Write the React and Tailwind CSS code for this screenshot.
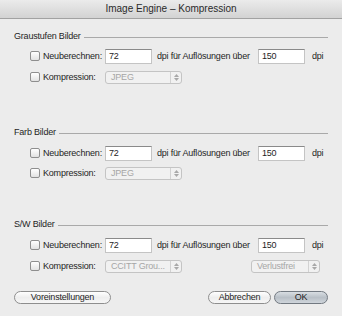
import React from 'react';

function Checkbox() {
  return (
    <span className="w-[10px] h-[10px] shrink-0 rounded-[2px] border border-[#8e8e8e] bg-gradient-to-b from-white to-[#e2e2e2]" />
  );
}

function TextInput({ value, className = '' }) {
  return (
    <div className={`h-[15px] shrink-0 bg-white border border-[#c4c4c4] border-t-[#8a8a8a] flex items-center pl-[3px] text-[#1e1e1e] ${className}`}>
      {value}
    </div>
  );
}

function Select({ value, className = '' }) {
  return (
    <div className={`h-[13px] shrink-0 flex items-center rounded-[3px] border border-[#c4c4c4] bg-[#f1f1f1] text-[#a6a6a6] ${className}`}>
      <span className="flex-1 pl-[5px] whitespace-nowrap overflow-hidden">{value}</span>
      <span className="w-[11px] h-full border-l border-[#d2d2d2] flex flex-col items-center justify-center gap-[1px]">
        <svg width="5" height="3" viewBox="0 0 5 3"><path d="M0 3 L2.5 0 L5 3 Z" fill="#a8a8a8" /></svg>
        <svg width="5" height="3" viewBox="0 0 5 3"><path d="M0 0 L2.5 3 L5 0 Z" fill="#a8a8a8" /></svg>
      </span>
    </div>
  );
}

function SectionHeader({ title, className = '' }) {
  return (
    <div className={`h-[12px] flex items-center px-[14px] ${className}`}>
      <div className="shrink-0 whitespace-nowrap text-[#1e1e1e]">{title}</div>
      <div className="grow ml-[3px] mt-[2px] border-t border-[#a9a9a9]" />
    </div>
  );
}

function ResampleRow({ className = '' }) {
  return (
    <div className={`h-[16px] flex items-center pl-[30px] whitespace-nowrap ${className}`}>
      <Checkbox />
      <span className="w-[65px] shrink-0 pl-[3px] text-[#1e1e1e]">Neuberechnen:</span>
      <TextInput value="72" className="w-[47px]" />
      <span className="w-[106px] shrink-0 pl-[5px] text-[#1e1e1e]">dpi für Auflösungen über</span>
      <TextInput value="150" className="w-[47px]" />
      <span className="pl-[7px] text-[#1e1e1e]">dpi</span>
    </div>
  );
}

function CompressionRow({ value, extra, className = '' }) {
  return (
    <div className={`h-[16px] flex items-center pl-[30px] whitespace-nowrap ${className}`}>
      <Checkbox />
      <span className="w-[65px] shrink-0 pl-[3px] text-[#1e1e1e]">Kompression:</span>
      <Select value={value} className="w-[77px]" />
      {extra && <Select value={extra} className="w-[69px] ml-[69px]" />}
    </div>
  );
}

function PillButton({ label, primary, className = '' }) {
  return (
    <div
      className={`h-[13px] shrink-0 rounded-full border flex items-center justify-center text-[#1e1e1e] ${
        primary
          ? 'border-[#727981] bg-gradient-to-b from-[#d9dee3] via-[#b9c0c7] to-[#cfd5db]'
          : 'border-[#8e8e8e] bg-gradient-to-b from-white via-[#eeeeee] to-[#f6f6f6]'
      } ${className}`}
    >
      {label}
    </div>
  );
}

export default function App() {
  return (
    <div className="w-[342px] h-[316px] bg-[#ececec] flex flex-col text-[9px] leading-none tracking-[-0.2px] font-['Liberation_Sans',Arial,sans-serif] overflow-hidden">
      <div className="h-[19px] shrink-0 flex items-center justify-center bg-gradient-to-b from-[#ebebeb] to-[#d3d3d3] border-b border-[#a2a2a2] text-[10px] tracking-normal text-[#2a2a2a]">
        Image Engine – Kompression
      </div>

      <SectionHeader title="Graustufen Bilder" className="mt-[11px]" />
      <ResampleRow className="mt-[6px]" />
      <CompressionRow value="JPEG" className="mt-[5px]" />

      <SectionHeader title="Farb Bilder" className="mt-[41px]" />
      <ResampleRow className="mt-[7px]" />
      <CompressionRow value="JPEG" className="mt-[4px]" />

      <SectionHeader title="S/W Bilder" className="mt-[37px]" />
      <ResampleRow className="mt-[7px]" />
      <CompressionRow value="CCITT Grou..." extra="Verlustfrei" className="mt-[5px]" />

      <div className="mt-[17px] flex items-center px-[14px]">
        <PillButton label="Voreinstellungen" className="w-[97px]" />
        <div className="flex-1" />
        <PillButton label="Abbrechen" className="w-[63px]" />
        <PillButton label="OK" primary className="w-[54px] ml-[3px]" />
      </div>
    </div>
  );
}
